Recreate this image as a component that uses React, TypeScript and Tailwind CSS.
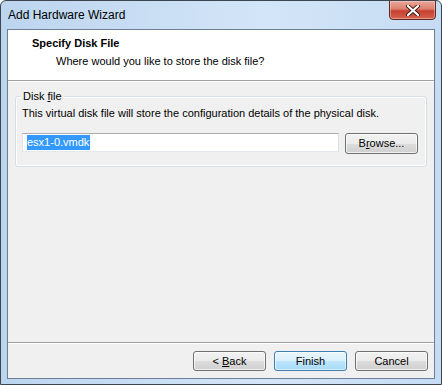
import React from 'react';

const font = { fontFamily: '"Liberation Sans", Arial, sans-serif' };

function WinButton({
  children,
  primary = false,
}: {
  children: React.ReactNode;
  primary?: boolean;
}) {
  return (
    <button
      className={
        primary
          ? 'w-[73px] h-[20px] rounded-[3px] border border-[#3c7fb1] bg-[linear-gradient(to_bottom,#eaf6fd_0%,#d9f0fc_50%,#bee6fd_51%,#a7d9f5_100%)] text-[11px] leading-none text-black shadow-[inset_0_0_0_1px_rgba(255,255,255,0.6)]'
          : 'w-[73px] h-[20px] rounded-[3px] border border-[#707070] bg-[linear-gradient(to_bottom,#f2f2f2_0%,#ebebeb_50%,#dddddd_51%,#cfcfcf_100%)] text-[11px] leading-none text-black shadow-[inset_0_0_0_1px_rgba(255,255,255,0.7)]'
      }
    >
      {children}
    </button>
  );
}

export default function App() {
  return (
    <div
      style={font}
      className="w-[442px] h-[385px] flex flex-col border border-[#3d4650] rounded-t-[6px] overflow-hidden bg-[linear-gradient(to_right,#bcd5ef_0%,#c8ddf3_30%,#d3e5f8_60%,#c6dcf3_100%)]"
    >
      {/* title bar */}
      <div className="relative h-[28px] shrink-0">
        <div className="absolute left-[7px] top-[7px] text-[12px] leading-[15px] text-black">
          Add Hardware Wizard
        </div>
        <div className="absolute right-[5px] -top-px w-[47px] h-[20px] rounded-b-[4px] border border-[#5b2a22] bg-[linear-gradient(to_bottom,#e9a99c_0%,#dc7d6e_45%,#c6402f_55%,#d4644f_100%)] flex items-center justify-center shadow-[inset_0_0_0_1px_rgba(255,220,210,0.45)]">
          <svg width="14" height="11" viewBox="0 0 14 11">
            <path
              d="M2 1 L12 10 M12 1 L2 10"
              stroke="#3d1a14"
              strokeWidth="4"
              strokeLinecap="round"
            />
            <path
              d="M2 1 L12 10 M12 1 L2 10"
              stroke="#ffffff"
              strokeWidth="2.2"
              strokeLinecap="round"
            />
          </svg>
        </div>
      </div>

      {/* client area */}
      <div className="mx-[6px] h-[350px] shrink-0 border border-[#6d7f93] bg-[#f0f0f0] flex flex-col">
        {/* header */}
        <div className="h-[51px] shrink-0 bg-white border-b border-[#a0a0a0] pt-[6px]">
          <div className="pl-[24px] text-[11px] leading-[15px] font-bold text-black">
            Specify Disk File
          </div>
          <div className="pl-[48px] pt-[3px] text-[11px] leading-[15px] text-black">
            Where would you like to store the disk file?
          </div>
        </div>
        <div className="h-px bg-white shrink-0" />

        {/* body */}
        <div className="flex-1 px-[7px] pt-[14px]">
          <div className="relative h-[71px] rounded-[3px] border border-[#d5dfe5] shadow-[inset_0_0_0_1px_#ffffff] px-[6px] pt-[9px]">
            <div className="absolute left-[5px] -top-[8px] px-[2px] bg-[#f0f0f0] text-[11px] leading-[15px] text-black">
              Disk <span className="underline">f</span>ile
            </div>
            <div className="text-[11px] leading-[15px] text-black">
              This virtual disk file will store the configuration details of the physical disk.
            </div>
            <div className="flex items-start gap-[6px] mt-[12px]">
              <div className="w-[317px] h-[19px] border border-[#abadb3] border-l-[#e2e3ea] border-r-[#dbdfe6] border-b-[#e3e9ef] bg-white flex items-center pl-[4px]">
                <span className="bg-[#3399ff] text-white text-[11px] leading-[15px] pr-px">
                  esx1-0.vmdk
                </span>
              </div>
              <button className="w-[73px] h-[21px] rounded-[3px] border border-[#707070] bg-[linear-gradient(to_bottom,#f2f2f2_0%,#ebebeb_50%,#dddddd_51%,#cfcfcf_100%)] text-[11px] leading-none text-black shadow-[inset_0_0_0_1px_rgba(255,255,255,0.7)]">
                B<span className="underline">r</span>owse...
              </button>
            </div>
          </div>
        </div>

        {/* footer */}
        <div className="shrink-0 border-t border-[#a0a0a0]">
          <div className="h-px bg-white" />
          <div className="flex justify-end gap-[8px] pr-[6px] pt-[7px] pb-[7px]">
            <WinButton>
              &lt; <span className="underline">B</span>ack
            </WinButton>
            <WinButton primary>Finish</WinButton>
            <WinButton>Cancel</WinButton>
          </div>
        </div>
      </div>
    </div>
  );
}
